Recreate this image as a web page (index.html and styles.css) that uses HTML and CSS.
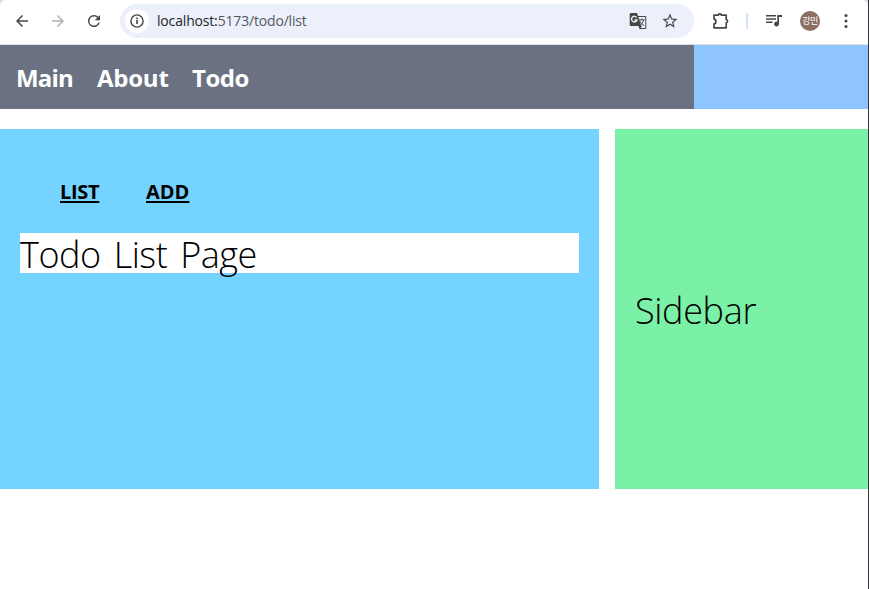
FILE: index.html
```html
<!DOCTYPE html>
<html lang="ko">
<head>
<meta charset="utf-8">
<title>Todo List</title>
<link rel="stylesheet" href="styles.css">
</head>
<body>
<div class="window">
  <header class="toolbar">
    <svg class="icon back" viewBox="0 0 24 24"><path d="M20 11H7.8l5.6-5.6L12 4l-8 8 8 8 1.4-1.4L7.8 13H20z"/></svg>
    <svg class="icon forward" viewBox="0 0 24 24"><path d="M4 11h12.2l-5.6-5.6L12 4l8 8-8 8-1.4-1.4 5.6-5.6H4z"/></svg>
    <svg class="icon reload" viewBox="0 0 24 24"><path d="M17.65 6.35A8 8 0 1 0 19.73 14h-2.08A6 6 0 1 1 12 6c1.66 0 3.14.69 4.22 1.78L13 11h7V4z"/></svg>
    <div class="address">
      <span class="info"><svg class="icon-info" viewBox="0 0 16 16"><circle cx="8" cy="8" r="6.1" fill="none" stroke="currentColor" stroke-width="1.4"/><path d="M7.2 7.1h1.6v4H7.2zM7.2 4.6h1.6v1.6H7.2z"/></svg></span>
      <span class="url"><b>localhost:</b>5173/todo/list</span>
      <svg class="icon-translate" viewBox="0 0 18 18"><path d="M2 1h6l1 3h7a1.3 1.3 0 0 1 1.3 1.3v10.4A1.3 1.3 0 0 1 16 17h-5.5l-1-3H2a1.3 1.3 0 0 1-1.3-1.3V2.3A1.3 1.3 0 0 1 2 1z"/><path class="paper" d="M9.4 5h6.3q.6 0 .6.6v9.8q0 .6-.6.6h-4.2l1.5-2-1-.4z"/><path class="gmark" d="M7.7 5.6A2.8 2.8 0 1 0 8 8H5.5"/><path class="mark" d="M10 7.8h5.6M12.8 6.6v1.2M11 9.2c.6 1.8 2 3.3 4.2 4.4M14.5 8c-.4 2.5-1.8 4.3-3.5 5.5"/></svg>
      <svg class="icon star" viewBox="0 0 24 24"><path d="m22 9.24-7.19-.62L12 2 9.19 8.63 2 9.24l5.46 4.73L5.82 21 12 17.27 18.18 21l-1.63-7.03zM12 15.4l-3.76 2.27 1-4.28-3.32-2.88 4.38-.38L12 6.1l1.71 4.04 4.38.38-3.32 2.88 1 4.28z"/></svg>
    </div>
    <svg class="icon-puzzle" viewBox="0 0 18 18"><path d="M2 3.2h4.2a1.6 1.3 0 0 1 3.2 0h4.8v4.4a1.3 1.6 0 0 1 0 3.2v5H2v-3.9c2.6-.4 2.6-4.4 0-4.8z"/></svg>
    <span class="divider"></span>
    <svg class="icon-media" viewBox="0 0 16 14"><path d="M0 1h10v1.6H0zM0 4.2h10v1.6H0zM0 7.4h6.5V9H0zM11.3 1H16v2h-3v7a2.4 2.4 0 1 1-1.7-2.3z"/></svg>
    <span class="avatar">강민</span>
    <svg class="icon-more" viewBox="0 0 4 16"><circle cx="2" cy="2.5" r="1.5"/><circle cx="2" cy="8" r="1.5"/><circle cx="2" cy="13.5" r="1.5"/></svg>
  </header>
  <div class="top">
    <nav class="menu"><a class="m1">Main</a><a class="m2">About</a><a class="m3">Todo</a></nav>
    <div class="account"></div>
  </div>
  <div class="content">
    <main class="main">
      <div class="tabs"><a class="list">LIST</a><a class="add">ADD</a></div>
      <div class="page"><span>Todo List Page</span></div>
    </main>
    <aside class="sidebar"><span>Sidebar</span></aside>
  </div>
</div>
</body>
</html>
```
FILE: styles.css
```css
* { box-sizing: border-box; }
body {
  margin: 0;
  width: 869px;
  height: 589px;
  overflow: hidden;
  background: #fff;
  font-family: "Open Sans", "Noto Sans CJK KR", sans-serif;
  color: #000;
}
.window {
  height: 589px;
  border-right: 1px solid #36363a;
  background: linear-gradient(#d5dfe9, #d5dfe9) 0 0 / 100% 10px no-repeat #fff;
}
svg { display: block; flex: none; fill: currentColor; }

.toolbar {
  display: flex;
  align-items: center;
  height: 45px;
  padding: 0 0 3px 13px;
  border-bottom: 1px solid #dedfe1;
  border-radius: 6px 6px 0 0;
  background: #fff;
  color: #454746;
}
.icon { width: 18px; height: 18px; }
.forward { margin-left: 18px; color: #b0b1b1; }
.reload { margin-left: 18px; }
.address {
  display: flex;
  align-items: center;
  width: 574px;
  height: 34px;
  margin-left: 17px;
  padding: 0 16px 0 5px;
  border-radius: 17px;
  background: #ecf0fa;
}
.info {
  display: flex;
  align-items: center;
  justify-content: center;
  width: 24px;
  height: 24px;
  border-radius: 50%;
  background: #fff;
}
.icon-info { width: 16px; height: 16px; }
.url {
  flex: 1;
  margin-left: 8px;
  font-size: 14px;
  line-height: 20px;
  letter-spacing: -0.17px;
  color: #55585c;
}
.url b { font-weight: 400; color: #1f1f1f; }
.icon-translate { width: 18px; height: 18px; margin-right: 14px; }
.paper { fill: #ecf0fa; }
.gmark { fill: none; stroke: #ecf0fa; stroke-width: 1.4; }
.mark { fill: none; stroke: currentColor; stroke-width: 1; }
.address .star { margin-right: -1px; }
.icon-puzzle { width: 18px; height: 18px; margin-left: 18px; fill: none; stroke: currentColor; stroke-width: 1.7; stroke-linejoin: round; }
.divider { width: 2px; height: 16px; margin-left: 16px; background: #d3e3fd; }
.icon-media { width: 16px; height: 14px; margin-left: 18px; }
.avatar {
  width: 20px;
  height: 20px;
  margin-left: 18px;
  border-radius: 50%;
  background: #8d6e63;
  color: #fff;
  font: 9px/19px "Noto Sans CJK KR", sans-serif;
  letter-spacing: -0.5px;
  text-align: center;
}
.icon-more { width: 4px; height: 16px; margin-left: 24px; }

.top { display: flex; height: 64px; }
.menu {
  display: flex;
  align-items: center;
  gap: 24px;
  width: 694px;
  padding: 2px 16px 0;
  background: #6a7282;
  color: #fff;
  font-size: 24px;
  font-weight: 700;
  line-height: 32px;
  letter-spacing: -0.45px;
}
.m1 { width: 57px; letter-spacing: -0.8px; }
.m2 { width: 71px; letter-spacing: -0.25px; }
.account { flex: 1; background: #8ec5ff; }

.content { display: flex; gap: 16px; height: 360px; margin-top: 20px; }
.main { width: 599px; padding: 49px 20px 0; background: #74d4ff; }
.tabs {
  display: flex;
  height: 55px;
  padding-left: 40px;
  font-size: 20px;
  font-weight: 700;
  line-height: 28px;
  text-decoration: underline;
  text-underline-offset: 2px;
  text-decoration-thickness: 2px;
}
.list { width: 86px; letter-spacing: -0.3px; }
.page { height: 40px; background: #fff; }
.page, .sidebar { font-size: 36px; font-weight: 340; line-height: 44px; white-space: nowrap; }
.page { word-spacing: 4px; letter-spacing: -0.45px; }
.sidebar { display: flex; align-items: center; flex: 1; padding: 4px 0 0 20px; background: #7bf1a8; letter-spacing: -0.35px; }
```
